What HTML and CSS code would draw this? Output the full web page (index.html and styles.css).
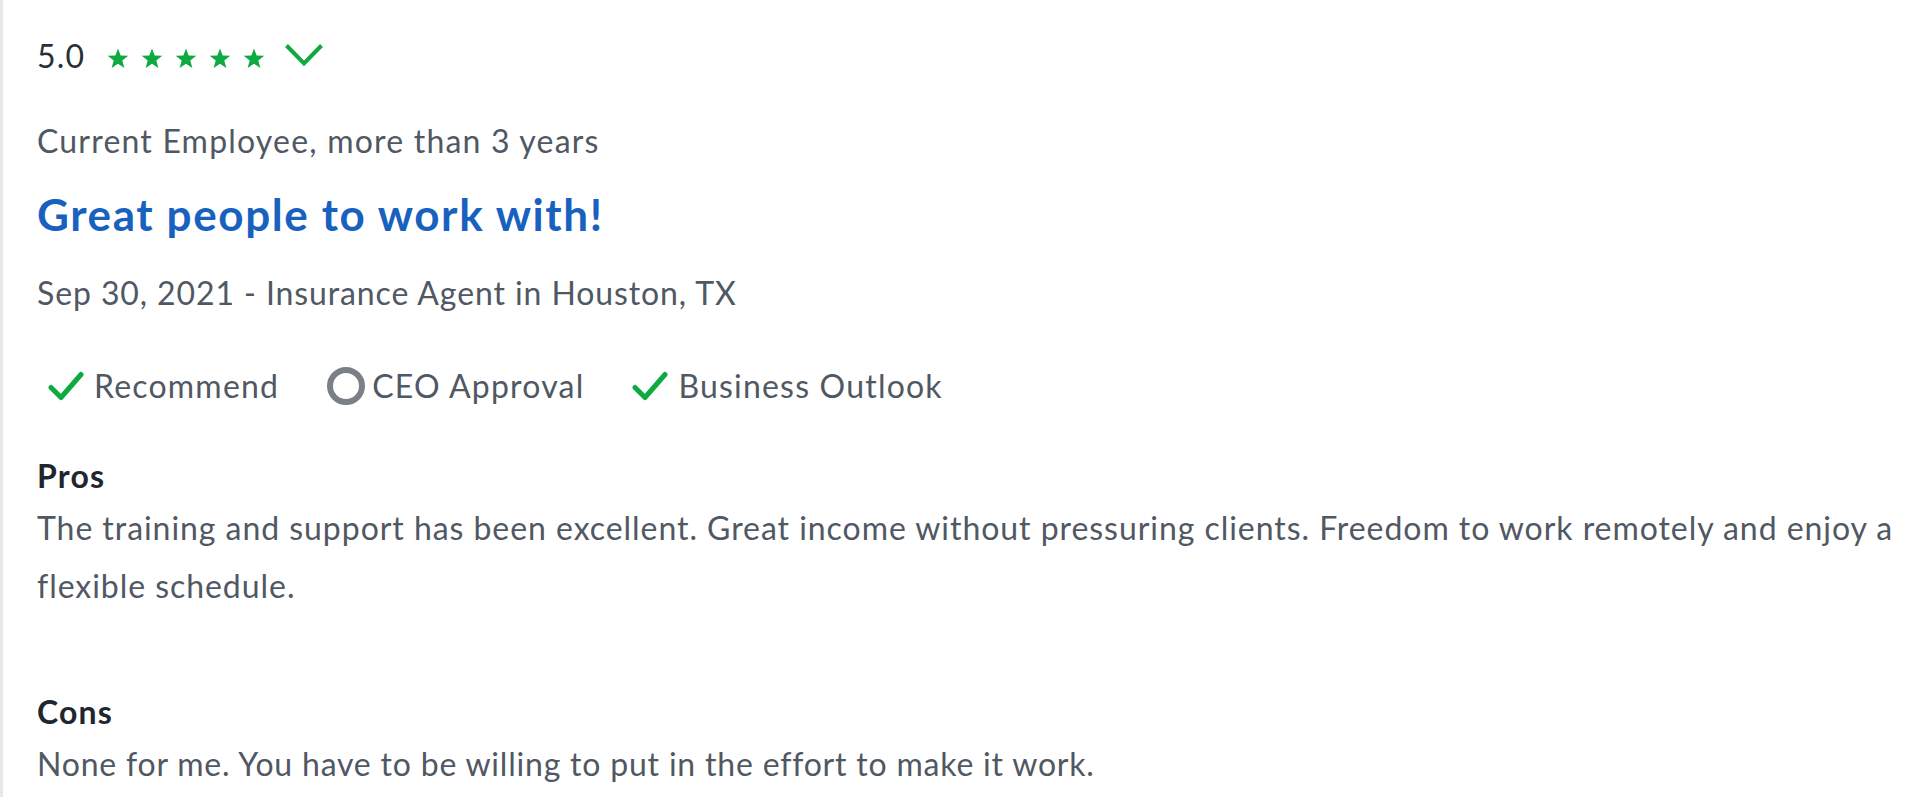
FILE: index.html
```html
<!DOCTYPE html>
<html lang="en">
<head>
<meta charset="utf-8">
<title>Review</title>
<link rel="stylesheet" href="styles.css">
</head>
<body>
<div class="review">
  <div class="rating">
    <span class="score">5.0</span>
    <span class="stars">
      <svg class="star" viewBox="0 0 24 23"><polygon points="12,0.5 14.9,8.3 23.3,8.6 16.7,13.8 19,21.9 12,17.2 5,21.9 7.3,13.8 0.7,8.6 9.1,8.3"/></svg>
      <svg class="star" viewBox="0 0 24 23"><polygon points="12,0.5 14.9,8.3 23.3,8.6 16.7,13.8 19,21.9 12,17.2 5,21.9 7.3,13.8 0.7,8.6 9.1,8.3"/></svg>
      <svg class="star" viewBox="0 0 24 23"><polygon points="12,0.5 14.9,8.3 23.3,8.6 16.7,13.8 19,21.9 12,17.2 5,21.9 7.3,13.8 0.7,8.6 9.1,8.3"/></svg>
      <svg class="star" viewBox="0 0 24 23"><polygon points="12,0.5 14.9,8.3 23.3,8.6 16.7,13.8 19,21.9 12,17.2 5,21.9 7.3,13.8 0.7,8.6 9.1,8.3"/></svg>
      <svg class="star" viewBox="0 0 24 23"><polygon points="12,0.5 14.9,8.3 23.3,8.6 16.7,13.8 19,21.9 12,17.2 5,21.9 7.3,13.8 0.7,8.6 9.1,8.3"/></svg>
    </span>
    <svg class="chevron" viewBox="0 0 40 24"><path d="M2.5 2.5 L20 20.5 L37.5 2.5"/></svg>
  </div>
  <div class="status">Current Employee, more than 3 years</div>
  <h2 class="title">Great people to work with!</h2>
  <div class="meta">Sep 30, 2021 - Insurance Agent in Houston, TX</div>
  <div class="flags">
    <span class="flag">
      <svg class="check" viewBox="0 0 36 30"><path d="M3 16.5 L13 26.5 L33 3.5"/></svg>
      <span>Recommend</span>
    </span>
    <span class="flag">
      <span class="ring"></span>
      <span>CEO Approval</span>
    </span>
    <span class="flag">
      <svg class="check" viewBox="0 0 36 30"><path d="M3 16.5 L13 26.5 L33 3.5"/></svg>
      <span>Business Outlook</span>
    </span>
  </div>
  <div class="section pros">
    <div class="label">Pros</div>
    <p class="text">The training and support has been excellent. Great income without pressuring clients. Freedom to work remotely and enjoy a flexible schedule.</p>
  </div>
  <div class="section cons">
    <div class="label">Cons</div>
    <p class="text">None for me. You have to be willing to put in the effort to make it work.</p>
  </div>
</div>
</body>
</html>
```

FILE: styles.css
```css
html, body {
  margin: 0;
  padding: 0;
  background: #ffffff;
}

body {
  font-family: Lato, "Open Sans", Arial, sans-serif;
  font-size: 32px;
  letter-spacing: 1.2px;
  color: #505863;
}

.review {
  border-left: 3px solid #e8e8e8;
  min-height: 797px;
  box-sizing: border-box;
  padding: 28px 0 0 34px;
}

.rating {
  display: flex;
  align-items: center;
  height: 56px;
  line-height: 56px;
}

.score {
  color: #2a3038;
  margin-right: 22px;
}

.stars {
  display: flex;
  gap: 12px;
  margin-top: 4px;
}

.star {
  width: 22px;
  height: 21px;
  fill: #0caa41;
}

.chevron {
  width: 40px;
  height: 24px;
  margin-left: 19px;
  margin-top: -2px;
  fill: none;
  stroke: #0caa41;
  stroke-width: 4;
}

.status {
  margin-top: 29px;
  line-height: 56px;
}

.title {
  margin: 15px 0 0;
  font-size: 44px;
  font-weight: 700;
  letter-spacing: 1.6px;
  line-height: 60px;
  color: #1861bf;
}

.meta {
  margin-top: 21px;
  line-height: 56px;
  letter-spacing: 0.9px;
}

.flags {
  display: flex;
  align-items: center;
  gap: 48px;
  margin-top: 37px;
  margin-left: 11px;
  line-height: 56px;
}

.flag {
  display: flex;
  align-items: center;
  gap: 10px;
}

.check {
  width: 36px;
  height: 30px;
  fill: none;
  stroke: #0caa41;
  stroke-width: 5;
  stroke-linecap: round;
  stroke-linejoin: round;
}

.ring {
  width: 26px;
  height: 26px;
  border: 6px solid #7b8088;
  border-radius: 50%;
  margin-right: -3px;
}

.section {
  margin-top: 39px;
}

.cons {
  margin-top: 74px;
}

.label {
  font-weight: 700;
  color: #20262e;
  line-height: 46px;
}

.text {
  margin: 0;
  line-height: 58px;
}

.pros .text {
  letter-spacing: 0.95px;
}

.cons .text {
  letter-spacing: 0.8px;
}
```
